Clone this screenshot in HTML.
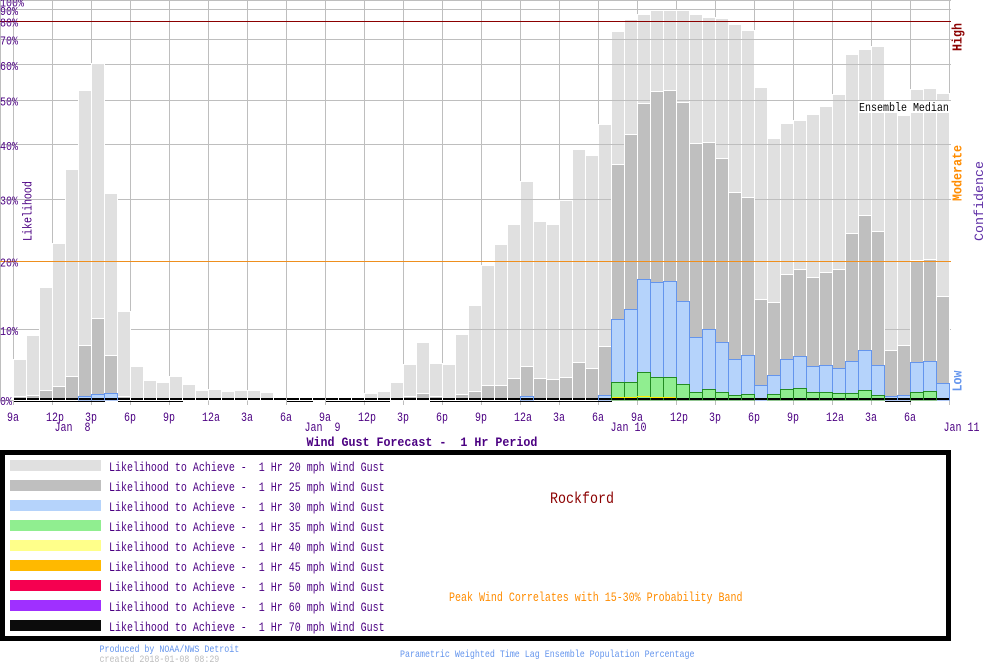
<!DOCTYPE html>
<html><head><meta charset="utf-8"><title>Wind Gust Forecast</title>
<style>
html,body{margin:0;padding:0;background:#fff;width:1000px;height:670px;overflow:hidden}
svg{display:block}
text{font-family:"Liberation Mono","DejaVu Sans Mono",monospace;white-space:pre}
</style></head><body>
<svg width="1000" height="670" viewBox="0 0 1000 670" xmlns="http://www.w3.org/2000/svg" xml:space="preserve">
<!-- vertical grid -->
<path fill="none" stroke="#bebebe" d="M.5 0V400M13.5 0V405M52.5 0V405M91.5 0V405M130.5 0V405M169.5 0V405M208.5 0V405M247.5 0V405M286.5 0V405M325.5 0V405M364.5 0V405M403.5 0V405M442.5 0V405M481.5 0V405M520.5 0V405M559.5 0V405M598.5 0V405M637.5 0V405M676.5 0V405M715.5 0V405M754.5 0V405M793.5 0V405M832.5 0V405M871.5 0V405M910.5 0V405M949.5 0V405"/>
<!-- light bars, right part -->
<path fill="#e0e0e0" stroke="#fff" d="M130.5 366.5V400h13V366.5zM143.5 380.5V400h13V380.5zM156.5 382.5V400h13V382.5zM169.5 376.5V400h13V376.5zM182.5 384.5V400h13V384.5zM195.5 390.5V400h13V390.5zM208.5 389.5V400h13V389.5zM221.5 391.5V400h13V391.5zM234.5 390.5V400h13V390.5zM247.5 390.5V400h13V390.5zM260.5 392.5V400h13V392.5zM364.5 393.5V400h13V393.5zM377.5 391.5V400h13V391.5zM390.5 382.5V400h13V382.5zM403.5 364.5V400h13V364.5zM416.5 342.5V400h13V342.5zM429.5 363.5V400h13V363.5zM442.5 364.5V400h13V364.5zM455.5 334.5V400h13V334.5zM468.5 305.5V400h13V305.5zM481.5 265.5V400h13V265.5zM494.5 244.5V400h13V244.5zM507.5 224.5V400h13V224.5zM520.5 181.5V400h13V181.5zM533.5 221.5V400h13V221.5zM546.5 224.5V400h13V224.5zM559.5 200.5V400h13V200.5zM572.5 149.5V400h13V149.5zM585.5 155.5V400h13V155.5zM598.5 124.5V400h13V124.5zM611.5 31.5V400h13V31.5zM624.5 19.5V400h13V19.5zM637.5 14.5V400h13V14.5zM650.5 10.5V400h13V10.5zM663.5 10.5V400h13V10.5zM676.5 10.5V400h13V10.5zM689.5 14.5V400h13V14.5zM702.5 17.5V400h13V17.5zM715.5 18.5V400h13V18.5zM728.5 24.5V400h13V24.5zM741.5 30.5V400h13V30.5zM754.5 87.5V400h13V87.5zM767.5 138.5V400h13V138.5zM780.5 123.5V400h13V123.5zM793.5 120.5V400h13V120.5zM806.5 114.5V400h13V114.5zM819.5 106.5V400h13V106.5zM832.5 94.5V400h13V94.5zM845.5 54.5V400h13V54.5zM858.5 49.5V400h13V49.5zM871.5 46.5V400h13V46.5zM884.5 104.5V400h13V104.5zM897.5 115.5V400h13V115.5zM910.5 89.5V400h13V89.5zM923.5 88.5V400h13V88.5zM936.5 93.5V400h13V93.5z"/>
<!-- horizontal grid -->
<path fill="none" stroke="#bebebe" d="M0 .5H951M0 9.5H951M0 39.5H951M0 64.5H951M0 100.5H951M0 144.5H951M0 199.5H951M0 329.5H951M0 400.5H13"/>
<!-- light bars, left part -->
<path fill="#e0e0e0" stroke="#fff" d="M13.5 359.5V400h13V359.5zM26.5 335.5V400h13V335.5zM39.5 287.5V400h13V287.5zM52.5 243.5V400h13V243.5zM65.5 169.5V400h13V169.5zM78.5 90.5V400h13V90.5zM91.5 63.5V400h13V63.5zM104.5 193.5V400h13V193.5zM117.5 311.5V400h13V311.5z"/>
<!-- gray bars -->
<path fill="#bfbfbf" stroke="#fff" d="M13.5 396.5V400h13V396.5zM26.5 395.5V400h13V395.5zM39.5 390.5V400h13V390.5zM52.5 386.5V400h13V386.5zM65.5 376.5V400h13V376.5zM78.5 345.5V400h13V345.5zM91.5 318.5V400h13V318.5zM104.5 355.5V400h13V355.5zM117.5 396.5V400h13V396.5zM403.5 396.5V400h13V396.5zM416.5 393.5V400h13V393.5zM429.5 396.5V400h13V396.5zM455.5 394.5V400h13V394.5zM468.5 391.5V400h13V391.5zM481.5 385.5V400h13V385.5zM494.5 385.5V400h13V385.5zM507.5 378.5V400h13V378.5zM520.5 366.5V400h13V366.5zM533.5 378.5V400h13V378.5zM546.5 379.5V400h13V379.5zM559.5 377.5V400h13V377.5zM572.5 362.5V400h13V362.5zM585.5 368.5V400h13V368.5zM598.5 346.5V400h13V346.5zM611.5 164.5V400h13V164.5zM624.5 134.5V400h13V134.5zM637.5 103.5V400h13V103.5zM650.5 91.5V400h13V91.5zM663.5 90.5V400h13V90.5zM676.5 102.5V400h13V102.5zM689.5 143.5V400h13V143.5zM702.5 142.5V400h13V142.5zM715.5 158.5V400h13V158.5zM728.5 192.5V400h13V192.5zM741.5 197.5V400h13V197.5zM754.5 299.5V400h13V299.5zM767.5 302.5V400h13V302.5zM780.5 274.5V400h13V274.5zM793.5 269.5V400h13V269.5zM806.5 277.5V400h13V277.5zM819.5 272.5V400h13V272.5zM832.5 269.5V400h13V269.5zM845.5 233.5V400h13V233.5zM858.5 215.5V400h13V215.5zM871.5 231.5V400h13V231.5zM884.5 350.5V400h13V350.5zM897.5 345.5V400h13V345.5zM910.5 260.5V400h13V260.5zM923.5 259.5V400h13V259.5zM936.5 296.5V400h13V296.5z"/>
<!-- blue bars -->
<path fill="#b5d3fb" stroke="#6495ed" d="M78.5 396.5V400h13V396.5zM91.5 394.5V400h13V394.5zM104.5 393.5V400h13V393.5zM520.5 396.5V400h13V396.5zM598.5 395.5V400h13V395.5zM611.5 319.5V400h13V319.5zM624.5 309.5V400h13V309.5zM637.5 279.5V400h13V279.5zM650.5 282.5V400h13V282.5zM663.5 281.5V400h13V281.5zM676.5 301.5V400h13V301.5zM689.5 337.5V400h13V337.5zM702.5 329.5V400h13V329.5zM715.5 342.5V400h13V342.5zM728.5 359.5V400h13V359.5zM741.5 355.5V400h13V355.5zM754.5 385.5V400h13V385.5zM767.5 375.5V400h13V375.5zM780.5 359.5V400h13V359.5zM793.5 356.5V400h13V356.5zM806.5 366.5V400h13V366.5zM819.5 365.5V400h13V365.5zM832.5 368.5V400h13V368.5zM845.5 361.5V400h13V361.5zM858.5 350.5V400h13V350.5zM871.5 365.5V400h13V365.5zM884.5 396.5V400h13V396.5zM897.5 395.5V400h13V395.5zM910.5 362.5V400h13V362.5zM923.5 361.5V400h13V361.5zM936.5 383.5V400h13V383.5z"/>
<!-- green bars -->
<path fill="#90ee90" stroke="#228b22" d="M611.5 382.5V400h13V382.5zM624.5 382.5V400h13V382.5zM637.5 372.5V400h13V372.5zM650.5 377.5V400h13V377.5zM663.5 377.5V400h13V377.5zM676.5 384.5V400h13V384.5zM689.5 392.5V400h13V392.5zM702.5 389.5V400h13V389.5zM715.5 392.5V400h13V392.5zM728.5 395.5V400h13V395.5zM741.5 394.5V400h13V394.5zM767.5 394.5V400h13V394.5zM780.5 389.5V400h13V389.5zM793.5 388.5V400h13V388.5zM806.5 392.5V400h13V392.5zM819.5 392.5V400h13V392.5zM832.5 393.5V400h13V393.5zM845.5 393.5V400h13V393.5zM858.5 390.5V400h13V390.5zM871.5 395.5V400h13V395.5zM910.5 392.5V400h13V392.5zM923.5 391.5V400h13V391.5z"/>
<!-- yellow -->
<path fill="none" stroke="#ffe900" d="M612 397.5H637M637 396.5H650M650 397.5H676"/>
<!-- black baseline -->
<path fill="none" stroke="#000" stroke-width="2" stroke-dasharray="12 1" d="M14 399H950"/>
<path fill="none" stroke="#000" d="M14 401.5H105M118 401.5H183M287 401.5H313M326 401.5H390M430 401.5H612M885 401.5H911"/>
<!-- threshold lines -->
<path fill="none" stroke="#8b0000" d="M0 21.5H951"/>
<path fill="none" stroke="#ee8f1e" d="M0 261.5H951"/>
<!-- ensemble median -->
<rect x="859" y="101" width="91" height="12" fill="#fff"/>
<text font-size="10" fill="#000" transform="translate(859,111) scale(1,1.2)">Ensemble Median</text>
<!-- y labels -->
<g font-size="10" fill="#4b0082">
<text transform="translate(0,6.5) scale(1,1.2)">100%</text>
<text transform="translate(0,15) scale(1,1.2)">90%</text>
<text transform="translate(0,26.5) scale(1,1.2)">80%</text>
<text transform="translate(0,44.5) scale(1,1.2)">70%</text>
<text transform="translate(0,70) scale(1,1.2)">60%</text>
<text transform="translate(0,105.5) scale(1,1.2)">50%</text>
<text transform="translate(0,150) scale(1,1.2)">40%</text>
<text transform="translate(0,204.5) scale(1,1.2)">30%</text>
<text transform="translate(0,266.5) scale(1,1.2)">20%</text>
<text transform="translate(0,335) scale(1,1.2)">10%</text>
<text transform="translate(0,405) scale(1,1.2)">0%</text>
<text transform="translate(31.5,241) rotate(-90) scale(1,1.3)">Likelihood</text>
<!-- x labels -->
<text transform="translate(7,421) scale(1,1.25)">9a</text>
<text transform="translate(46,421) scale(1,1.25)">12p</text>
<text transform="translate(85,421) scale(1,1.25)">3p</text>
<text transform="translate(124,421) scale(1,1.25)">6p</text>
<text transform="translate(163,421) scale(1,1.25)">9p</text>
<text transform="translate(202,421) scale(1,1.25)">12a</text>
<text transform="translate(241,421) scale(1,1.25)">3a</text>
<text transform="translate(280,421) scale(1,1.25)">6a</text>
<text transform="translate(319,421) scale(1,1.25)">9a</text>
<text transform="translate(358,421) scale(1,1.25)">12p</text>
<text transform="translate(397,421) scale(1,1.25)">3p</text>
<text transform="translate(436,421) scale(1,1.25)">6p</text>
<text transform="translate(475,421) scale(1,1.25)">9p</text>
<text transform="translate(514,421) scale(1,1.25)">12a</text>
<text transform="translate(553,421) scale(1,1.25)">3a</text>
<text transform="translate(592,421) scale(1,1.25)">6a</text>
<text transform="translate(631,421) scale(1,1.25)">9a</text>
<text transform="translate(670,421) scale(1,1.25)">12p</text>
<text transform="translate(709,421) scale(1,1.25)">3p</text>
<text transform="translate(748,421) scale(1,1.25)">6p</text>
<text transform="translate(787,421) scale(1,1.25)">9p</text>
<text transform="translate(826,421) scale(1,1.25)">12a</text>
<text transform="translate(865,421) scale(1,1.25)">3a</text>
<text transform="translate(904,421) scale(1,1.25)">6a</text>
<text transform="translate(54.5,431) scale(1,1.25)">Jan  8</text>
<text transform="translate(304.5,431) scale(1,1.25)">Jan  9</text>
<text transform="translate(610.5,431) scale(1,1.25)">Jan 10</text>
<text transform="translate(943.5,431) scale(1,1.25)">Jan 11</text>
</g>
<text font-size="11.67" font-weight="bold" fill="#4b0082" transform="translate(306.5,446) scale(1,1.12)">Wind Gust Forecast -  1 Hr Period</text>
<!-- right labels -->
<g font-size="11.67" font-weight="bold">
<text fill="#8b0000" transform="translate(961.5,51) rotate(-90) scale(1,1.15)">High</text>
<text fill="#ff8c00" transform="translate(961.5,201) rotate(-90) scale(1,1.15)">Moderate</text>
<text fill="#6495ed" transform="translate(961.5,391.5) rotate(-90) scale(1,1.15)">Low</text>
</g>
<text font-size="13.33" fill="#5e2ea6" transform="translate(983,241) rotate(-90)">Confidence</text>
<!-- legend frame -->
<rect x="2.5" y="452.5" width="946" height="186" fill="#fff" stroke="#000" stroke-width="5"/>
<rect x="10" y="460" width="91" height="11" fill="#e0e0e0"/>
<rect x="10" y="480" width="91" height="11" fill="#bfbfbf"/>
<rect x="10" y="500" width="91" height="11" fill="#b5d3fb"/>
<rect x="10" y="520" width="91" height="11" fill="#90ee90"/>
<rect x="10" y="540" width="91" height="11" fill="#ffff8a"/>
<rect x="10" y="560" width="91" height="11" fill="#ffb900"/>
<rect x="10" y="580" width="91" height="11" fill="#f50050"/>
<rect x="10" y="600" width="91" height="11" fill="#9f30ff"/>
<rect x="10" y="620" width="91" height="11" fill="#0c0c0c"/>
<g font-size="10" fill="#4b0082">
<text transform="translate(109,471) scale(1,1.3)">Likelihood to Achieve -  1 Hr 20 mph Wind Gust</text>
<text transform="translate(109,491) scale(1,1.3)">Likelihood to Achieve -  1 Hr 25 mph Wind Gust</text>
<text transform="translate(109,511) scale(1,1.3)">Likelihood to Achieve -  1 Hr 30 mph Wind Gust</text>
<text transform="translate(109,531) scale(1,1.3)">Likelihood to Achieve -  1 Hr 35 mph Wind Gust</text>
<text transform="translate(109,551) scale(1,1.3)">Likelihood to Achieve -  1 Hr 40 mph Wind Gust</text>
<text transform="translate(109,571) scale(1,1.3)">Likelihood to Achieve -  1 Hr 45 mph Wind Gust</text>
<text transform="translate(109,591) scale(1,1.3)">Likelihood to Achieve -  1 Hr 50 mph Wind Gust</text>
<text transform="translate(109,611) scale(1,1.3)">Likelihood to Achieve -  1 Hr 60 mph Wind Gust</text>
<text transform="translate(109,631) scale(1,1.3)">Likelihood to Achieve -  1 Hr 70 mph Wind Gust</text>
</g>
<text font-size="13.33" fill="#8b0000" transform="translate(550,503) scale(1,1.15)">Rockford</text>
<text font-size="10" fill="#ff8c00" transform="translate(449,601) scale(1,1.25)">Peak Wind Correlates with 15-30% Probability Band</text>
<!-- footer -->
<text font-size="8.33" fill="#6495ed" transform="translate(99.5,652) scale(1,1.2)">Produced by NOAA/NWS Detroit</text>
<text font-size="8.33" fill="#bebebe" transform="translate(99.5,662) scale(1,1.2)">created 2018-01-08 08:29</text>
<text font-size="8.33" fill="#6495ed" transform="translate(400,657) scale(1,1.2)">Parametric Weighted Time Lag Ensemble Population Percentage</text>
</svg>
</body></html>
